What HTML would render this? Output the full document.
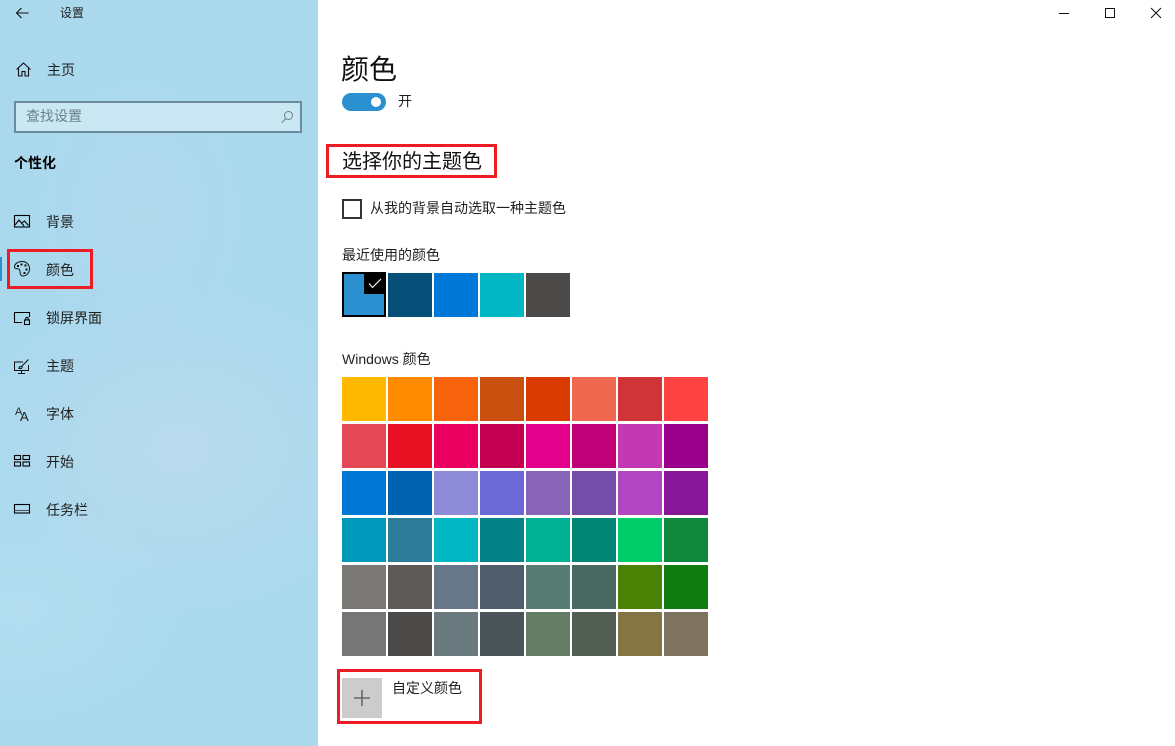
<!DOCTYPE html>
<html lang="zh">
<head>
<meta charset="utf-8">
<title>设置</title>
<style>
html,body{margin:0;padding:0;background:#fff}
body{width:1175px;height:746px;position:relative;overflow:hidden;font-family:"Liberation Sans","Noto Sans CJK SC",sans-serif;color:#1f1f1f}
.t{position:absolute;white-space:nowrap;font-size:14px;line-height:18px}
.b{position:absolute}
.red{position:absolute;border:3px solid #ed1c24;box-sizing:border-box}
#side{position:absolute;left:0;top:0;width:318px;height:746px;background:
radial-gradient(ellipse 110px 150px at 140px 215px,rgba(186,214,232,.45),rgba(186,214,232,0)),
radial-gradient(ellipse 210px 170px at 180px 450px,rgba(190,218,236,.75),rgba(190,218,236,0)),
radial-gradient(ellipse 170px 120px at 20px 610px,rgba(186,224,240,.55),rgba(186,224,240,0)),
#aad9ee}
.s{position:absolute;width:44px;height:44px}
svg{position:absolute;overflow:visible}
</style>
</head>
<body>
<div id="side"></div>

<svg style="left:16px;top:7px" width="14" height="12" fill="none" stroke="#111" stroke-width="1.1"><path d="M0.5 6H12.5M5.5 1L0.5 6L5.5 11"/></svg>
<div class="t" style="left:60px;top:4px;font-size:12px">设置</div>

<svg style="left:16px;top:62px" width="15" height="15" fill="none" stroke="#111" stroke-width="1.1"><path d="M0.5 7.5L7.5 1L14.5 7.5M2.5 6V14H6V9.5H9V14H12.5V6"/></svg>
<div class="t" style="left:47px;top:61px">主页</div>

<div class="b" style="left:14px;top:101px;width:288px;height:32px;box-sizing:border-box;border:2px solid #6c8b9e;background:#cae7f4"></div>
<div class="t" style="left:26px;top:107px;color:#6b7f8a">查找设置</div>
<svg style="left:281px;top:110px" width="13" height="13" fill="none" stroke="#6c7f8a" stroke-width="1"><circle cx="7.5" cy="5.5" r="4"/><path d="M4.7 8.5L0.7 12.7"/></svg>

<div class="t" style="left:14px;top:154px;font-weight:bold;color:#000">个性化</div>

<svg style="left:14px;top:215px" width="16" height="13" fill="none" stroke="#000" stroke-width="1.1"><rect x="0.5" y="0.5" width="15" height="11.5"/><path d="M1 10L5 5L10 11M8 8L10.5 6L14.5 10.5"/></svg>
<div class="t" style="left:46px;top:213px">背景</div>

<div class="b" style="left:0;top:257px;width:2px;height:24px;background:#2a90cf"></div>
<svg style="left:14px;top:261px" width="16" height="16" fill="none" stroke="#111" stroke-width="1"><path d="M8 0.5C3.5 0.5 0.5 3.2 0.5 6C0.5 8.5 4.5 7.2 5.5 8.5C6.5 10 5 13 8 15C12 15.5 15.5 12 15.5 8C15.5 3.5 12.5 0.5 8 0.5Z"/><g fill="#111" stroke="none"><rect x="3" y="4" width="2" height="2"/><rect x="6.5" y="2.5" width="2" height="2"/><rect x="10.5" y="3.5" width="2" height="2"/><rect x="11.5" y="7.5" width="2" height="2"/><rect x="9.5" y="11" width="2" height="2"/></g></svg>
<div class="t" style="left:46px;top:261px">颜色</div>
<div class="red" style="left:7px;top:249px;width:86px;height:40px"></div>

<svg style="left:14px;top:312px" width="16" height="13" fill="none" stroke="#000" stroke-width="1.1"><path d="M8 10.5H0.5V0.5H15.5V5"/><rect x="10.5" y="8" width="5" height="4.5"/><path d="M11.8 8V6.5A1.2 1.2 0 0 1 14.2 6.5V8"/></svg>
<div class="t" style="left:46px;top:309px">锁屏界面</div>

<svg style="left:14px;top:359px" width="16" height="15" fill="none" stroke="#111" stroke-width="1"><path d="M9 3H0.5V11.5H14.5V6M7.5 11.5V14.5M4 14.5H11"/><path d="M14.5 0.5L8 7M6 7.5C5 8 5 9.5 4.5 9.5H7C8 9.5 8.5 8 8 7.5Z"/></svg>
<div class="t" style="left:46px;top:357px">主题</div>

<div class="t" style="left:15px;top:406px;font-size:11px;line-height:12px">A</div>
<div class="t" style="left:20px;top:410px;font-size:13px;line-height:14px">A</div>
<div class="t" style="left:46px;top:405px">字体</div>

<svg style="left:14px;top:455px" width="16" height="12" fill="none" stroke="#000" stroke-width="1.1"><rect x="0.5" y="0.5" width="6" height="4"/><rect x="9" y="0.5" width="6.5" height="4"/><rect x="0.5" y="7" width="6" height="4"/><rect x="9" y="7" width="6.5" height="4"/></svg>
<div class="t" style="left:46px;top:453px">开始</div>

<svg style="left:14px;top:504px" width="16" height="10" fill="none" stroke="#000" stroke-width="1.1"><rect x="0.5" y="0.5" width="15" height="8.5"/><path d="M0.5 6.5H15.5" stroke="#555"/></svg>
<div class="t" style="left:46px;top:501px">任务栏</div>

<!-- window controls -->
<div class="b" style="left:1059px;top:13px;width:10px;height:1px;background:#111"></div>
<div class="b" style="left:1105px;top:8px;width:10px;height:10px;box-sizing:border-box;border:1px solid #111"></div>
<svg style="left:1151px;top:8px" width="10" height="10" fill="none" stroke="#111" stroke-width="1"><path d="M0 0L10 10M10 0L0 10"/></svg>

<!-- content -->
<div class="t" style="left:341px;top:50px;font-size:28px;line-height:40px;color:#111">颜色</div>
<div class="b" style="left:342px;top:93px;width:44px;height:18px;border-radius:9px;background:#2a90cf"></div>
<div class="b" style="left:371px;top:97px;width:10px;height:10px;border-radius:50%;background:#fff"></div>
<div class="t" style="left:398px;top:92px">开</div>

<div class="t" style="left:342px;top:148px;font-size:20px;line-height:28px;color:#111">选择你的主题色</div>
<div class="red" style="left:326px;top:144px;width:171px;height:34px"></div>

<div class="b" style="left:342px;top:199px;width:20px;height:20px;box-sizing:border-box;border:2px solid #333"></div>
<div class="t" style="left:370px;top:199px">从我的背景自动选取一种主题色</div>

<div class="t" style="left:342px;top:246px">最近使用的颜色</div>
<div class="b" style="left:342px;top:272px;width:44px;height:45px;box-sizing:border-box;border:2px solid #000;background:#2a90cf"></div>
<div class="b" style="left:364px;top:272px;width:22px;height:22px;background:#000"></div>
<svg style="left:368px;top:278px" width="14" height="11" fill="none" stroke="#fff" stroke-width="1.1"><path d="M1 5.5L4.5 9.5L13 1"/></svg>
<div class="s" style="left:388px;top:273px;background:#064f78"></div>
<div class="s" style="left:434px;top:273px;background:#0078d7"></div>
<div class="s" style="left:480px;top:273px;background:#00b7c3"></div>
<div class="s" style="left:526px;top:273px;background:#4c4a48"></div>

<div class="t" style="left:342px;top:350px">Windows 颜色</div>

<div class="s" style="left:342px;top:377px;background:#ffb900"></div>
<div class="s" style="left:388px;top:377px;background:#ff8c00"></div>
<div class="s" style="left:434px;top:377px;background:#f7630c"></div>
<div class="s" style="left:480px;top:377px;background:#ca5010"></div>
<div class="s" style="left:526px;top:377px;background:#da3b01"></div>
<div class="s" style="left:572px;top:377px;background:#ef6950"></div>
<div class="s" style="left:618px;top:377px;background:#d13438"></div>
<div class="s" style="left:664px;top:377px;background:#ff4343"></div>

<div class="s" style="left:342px;top:424px;background:#e74856"></div>
<div class="s" style="left:388px;top:424px;background:#e81123"></div>
<div class="s" style="left:434px;top:424px;background:#ea005e"></div>
<div class="s" style="left:480px;top:424px;background:#c30052"></div>
<div class="s" style="left:526px;top:424px;background:#e3008c"></div>
<div class="s" style="left:572px;top:424px;background:#bf0077"></div>
<div class="s" style="left:618px;top:424px;background:#c239b3"></div>
<div class="s" style="left:664px;top:424px;background:#9a0089"></div>

<div class="s" style="left:342px;top:471px;background:#0078d7"></div>
<div class="s" style="left:388px;top:471px;background:#0063b1"></div>
<div class="s" style="left:434px;top:471px;background:#8e8cd8"></div>
<div class="s" style="left:480px;top:471px;background:#6b69d6"></div>
<div class="s" style="left:526px;top:471px;background:#8764b8"></div>
<div class="s" style="left:572px;top:471px;background:#744da9"></div>
<div class="s" style="left:618px;top:471px;background:#b146c2"></div>
<div class="s" style="left:664px;top:471px;background:#881798"></div>

<div class="s" style="left:342px;top:518px;background:#0099bc"></div>
<div class="s" style="left:388px;top:518px;background:#2d7d9a"></div>
<div class="s" style="left:434px;top:518px;background:#00b7c3"></div>
<div class="s" style="left:480px;top:518px;background:#038387"></div>
<div class="s" style="left:526px;top:518px;background:#00b294"></div>
<div class="s" style="left:572px;top:518px;background:#018574"></div>
<div class="s" style="left:618px;top:518px;background:#00cc6a"></div>
<div class="s" style="left:664px;top:518px;background:#10893e"></div>

<div class="s" style="left:342px;top:565px;background:#7a7874"></div>
<div class="s" style="left:388px;top:565px;background:#5d5a58"></div>
<div class="s" style="left:434px;top:565px;background:#68768a"></div>
<div class="s" style="left:480px;top:565px;background:#515c6b"></div>
<div class="s" style="left:526px;top:565px;background:#567c73"></div>
<div class="s" style="left:572px;top:565px;background:#486860"></div>
<div class="s" style="left:618px;top:565px;background:#498205"></div>
<div class="s" style="left:664px;top:565px;background:#107c10"></div>

<div class="s" style="left:342px;top:612px;background:#767676"></div>
<div class="s" style="left:388px;top:612px;background:#4c4a48"></div>
<div class="s" style="left:434px;top:612px;background:#69797e"></div>
<div class="s" style="left:480px;top:612px;background:#4a5459"></div>
<div class="s" style="left:526px;top:612px;background:#647c64"></div>
<div class="s" style="left:572px;top:612px;background:#525e54"></div>
<div class="s" style="left:618px;top:612px;background:#847545"></div>
<div class="s" style="left:664px;top:612px;background:#7e735f"></div>

<div class="b" style="left:342px;top:678px;width:40px;height:40px;background:#cccccc"></div>
<svg style="left:354px;top:690px" width="16" height="16" fill="none" stroke="#666" stroke-width="1.6"><path d="M8 0V16M0 8H16"/></svg>
<div class="t" style="left:392px;top:679px">自定义颜色</div>
<div class="red" style="left:337px;top:669px;width:145px;height:55px"></div>
</body>
</html>
